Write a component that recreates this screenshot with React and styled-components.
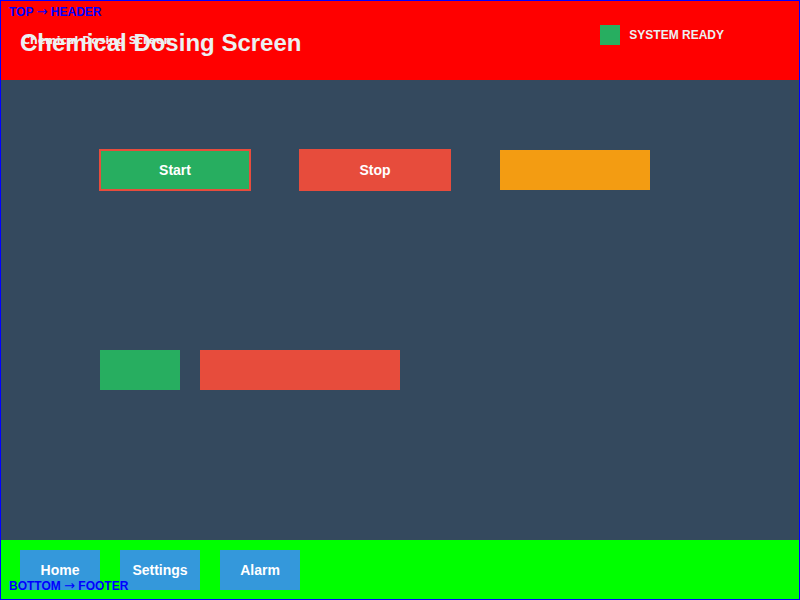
import React from "react";
import styled, { createGlobalStyle } from "styled-components";

const GlobalStyle = createGlobalStyle`
  html, body {
    margin: 0;
    padding: 0;
  }
  body {
    font-family: "Liberation Sans", Arial, sans-serif;
  }
`;

const Frame = styled.div`
  box-sizing: border-box;
  width: 800px;
  height: 600px;
  border: 1px solid #0000ff;
  display: flex;
  flex-direction: column;
  position: relative;
  overflow: hidden;
`;

const Header = styled.header`
  position: relative;
  height: 79px;
  flex: none;
  background: #ff0000;
  display: flex;
  align-items: center;
  padding: 0 75px 0 19px;
`;

const Title = styled.h1`
  margin: 0;
  padding-top: 4px;
  font-size: 24px;
  font-weight: bold;
  color: #ecf0f1;
`;

const SubTitle = styled.span`
  position: absolute;
  left: 21px;
  top: 33px;
  font-family: "DejaVu Sans", sans-serif;
  font-size: 11px;
  font-weight: bold;
  color: #ecf0f1;
`;

const AreaLabel = styled.span`
  position: absolute;
  left: 8px;
  top: ${(p) => p.$top}px;
  font-size: 12px;
  font-weight: bold;
  color: #0000ff;
  z-index: 2;
`;

const Arrow = styled.span`
  font-family: "DejaVu Sans", sans-serif;
  font-weight: normal;
  font-size: 13px;
`;

const Status = styled.div`
  margin-left: auto;
  align-self: flex-start;
  margin-top: 24px;
  display: flex;
  align-items: center;
  gap: 9px;
  font-size: 12px;
  font-weight: bold;
  color: #ecf0f1;
`;

const Lamp = styled.span`
  width: 20px;
  height: 20px;
  background: #27ae60;
`;

const Main = styled.main`
  flex: 1;
  background: #34495e;
  display: flex;
  flex-direction: column;
  padding: 69px 0 0 98px;
  gap: 159px;
`;

const Row = styled.div`
  display: flex;
  align-items: center;
  gap: ${(p) => p.$gap}px;
  padding-left: ${(p) => p.$indent || 0}px;
`;

const ControlButton = styled.button`
  box-sizing: border-box;
  width: 152px;
  height: 42px;
  border: 2px solid ${(p) => p.$edge || p.$bg};
  background: ${(p) => p.$bg};
  color: #ffffff;
  font-family: "Liberation Sans", Arial, sans-serif;
  font-size: 14px;
  font-weight: bold;
  padding: 0;
  margin-right: ${(p) => p.$after || 0}px;
`;

const Block = styled.div`
  width: ${(p) => p.$w}px;
  height: 40px;
  background: ${(p) => p.$bg};
`;

const Footer = styled.footer`
  position: relative;
  height: 59px;
  flex: none;
  background: #00ff00;
  display: flex;
  gap: 20px;
  padding: 10px 19px 0;
  box-sizing: border-box;
`;

const NavButton = styled.button`
  width: 80px;
  height: 40px;
  border: none;
  padding: 0;
  background: #3498db;
  color: #ffffff;
  font-family: "Liberation Sans", Arial, sans-serif;
  font-size: 14px;
  font-weight: bold;
`;

export default function App() {
  return (
    <>
      <GlobalStyle />
      <Frame>
        <Header>
          <AreaLabel $top={3}>
            TOP <Arrow>→</Arrow> HEADER
          </AreaLabel>
          <Title>Chemical Dosing Screen</Title>
          <SubTitle>Chemical Dosing Screen</SubTitle>
          <Status>
            <Lamp />
            SYSTEM READY
          </Status>
        </Header>
        <Main>
          <Row $gap={0}>
            <ControlButton $bg="#27ae60" $edge="#e74c3c" $after={48}>
              Start
            </ControlButton>
            <ControlButton $bg="#e74c3c" $after={49}>
              Stop
            </ControlButton>
            <Block $w={150} $bg="#f39c12" />
          </Row>
          <Row $gap={20} $indent={1}>
            <Block $w={80} $bg="#27ae60" />
            <Block $w={200} $bg="#e74c3c" />
          </Row>
        </Main>
        <Footer>
          <NavButton>Home</NavButton>
          <NavButton>Settings</NavButton>
          <NavButton>Alarm</NavButton>
          <AreaLabel $top={38}>
            BOTTOM <Arrow>→</Arrow> FOOTER
          </AreaLabel>
        </Footer>
      </Frame>
    </>
  );
}
